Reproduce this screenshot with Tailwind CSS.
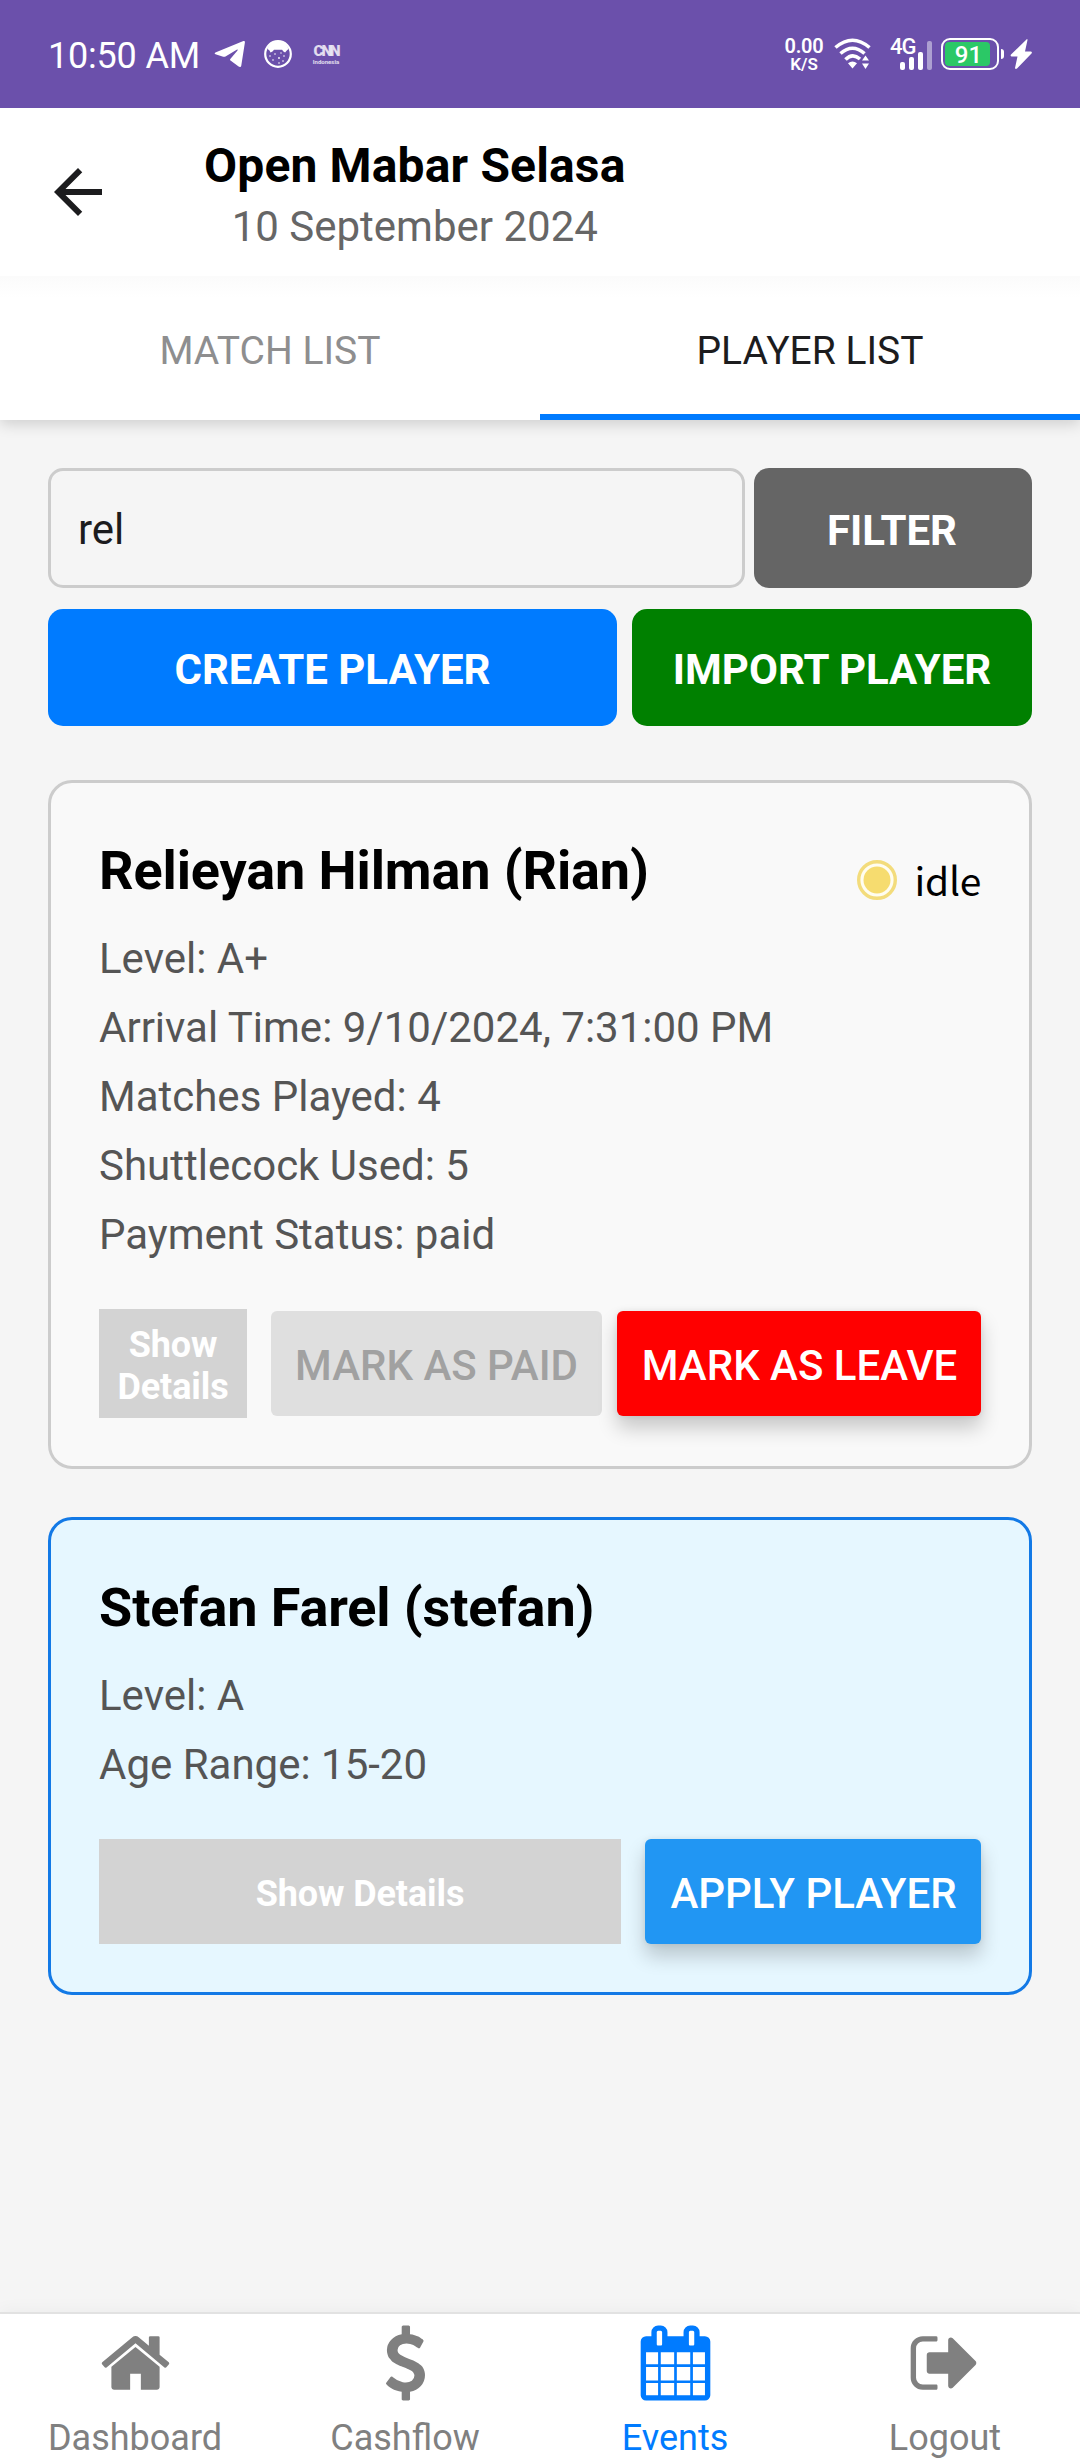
<!DOCTYPE html>
<html lang="en">
<head>
<meta charset="utf-8">
<title>Player List</title>
<script src="https://cdn.jsdelivr.net/npm/@tailwindcss/browser@4"></script>
</head>
<body class="w-[1080px] h-[2460px] overflow-hidden bg-[#f5f5f5] font-[Roboto,sans-serif] flex flex-col">

<!-- Status bar -->
<div class="h-[108px] shrink-0 bg-[#6b50ab] text-white flex items-center pl-[48px] pr-[48px]">
  <span class="text-[36px] leading-[44px] w-[152px] whitespace-nowrap pt-[3px] tracking-[-0.2px]">10:50 AM</span>
  <svg class="ml-[14px] w-[32px] h-[28px]" viewBox="0 0 32 28"><path fill="#fff" d="M2 12.3 29.4 1c1-.3 1.7.3 1.5 1.400L27.300 25.500c-.3 1.600-1.500 1.900-2.700 1.100L16.500 20.500c-.6-.5-.6-1.200 0-1.800l7-8.200c.5-.7 0-1.200-.8-.7L11.500 16.500c-.7.4-1.500.5-2.300.2L1.500 14.200C.2 13.700.4 12.900 2 12.300z"/></svg>
  <svg class="ml-[17px] w-[30px] h-[30px]" viewBox="0 0 30 30"><circle cx="15" cy="15" r="12.800" fill="none" stroke="#fff" stroke-width="2.200"/><path fill="#fff" d="M4.500 10C6 5 10 2.500 15 2.500S24 5 25.500 10l-1.700 1.600-1.700 1.800-1.700-1-1.300-1.600H11l-1.500 1.700-2 .9-1-2z"/><g fill="#fff"><circle cx="7" cy="17" r=".8"/><circle cx="12" cy="15" r=".8"/><circle cx="16" cy="19" r=".9"/><circle cx="21" cy="17" r=".8"/><circle cx="10" cy="21" r=".8"/><circle cx="20" cy="22" r=".8"/><circle cx="16" cy="24" r=".8"/><circle cx="18" cy="14" r=".7"/></g></svg>
  <div class="ml-[19px] w-[28px] flex flex-col items-center text-white/80">
    <span class="text-[15px] leading-[14px] font-black tracking-[-2px]">CNN</span>
    <span class="text-[6px] leading-[7px] font-bold">Indonesia</span>
  </div>
  <div class="ml-auto w-[42px] flex flex-col items-center font-semibold">
    <span class="text-[20px] leading-[20px] tracking-[-0.3px]">0.00</span>
    <span class="text-[17px] leading-[18px] mt-[-1px]">K/S</span>
  </div>
  <svg class="ml-[9px] w-[38px] h-[32px]" viewBox="0 0 38 32"><g fill="none" stroke="#fff" stroke-width="3.600"><path d="M1.500 9.500Q18.500-5 35.500 9.500"/><path d="M6.500 15.500Q18.500 5 30.500 15.500"/><path d="M11.500 21.500Q18.500 14.500 26 21"/></g><path fill="#fff" d="M14 25.300q4.500-3.500 9 0L18.500 30.500zM28 22.500l3.500-5 3.500 5zM28 25.500h7L31.500 31z"/></svg>
  <div class="ml-[18px] w-[46px] h-[34px] relative">
    <span class="absolute left-0 top-[-1px] text-[22px] leading-[22px] font-medium tracking-[-1px]">4G</span>
    <svg class="absolute inset-0" width="46" height="34" viewBox="0 0 46 34"><g fill="#fff"><rect x="10" y="25" width="5" height="8" rx="2"/><rect x="19" y="20" width="5" height="13" rx="2"/><rect x="28" y="15" width="5" height="18" rx="2"/><rect x="37" y="4" width="5" height="29" rx="2" opacity=".45"/></g></svg>
  </div>
  <div class="ml-[5px] w-[58px] h-[32px] rounded-[9px] border-2 border-white p-[2px]">
    <div class="w-[45px] h-[24px] rounded-[4px] bg-[#2bc866] text-[24px] leading-[26px] text-center font-medium pl-[2px]">91</div>
  </div>
  <div class="ml-[2px] w-[3px] h-[10px] bg-white rounded-r-[3px]"></div>
  <svg class="ml-[6px] w-[22px] h-[30px]" viewBox="0 0 22 30"><path fill="#fff" d="M17 0 1 15.500q-1 1.500.5 2h6L5 29q.5 1.500 2 .5L21.500 14.500q1-1.500-.5-2h-6L17.500 1q0-1-.5-1z"/></svg>
</div>

<!-- Header -->
<header class="h-[168px] shrink-0 bg-white flex items-start relative z-10">
  <svg class="ml-[42px] mt-[48px] w-[72px] h-[72px]" viewBox="0 0 24 24"><path fill="#1c1c1e" d="M20 11H7.830l5.590-5.590L12 4l-8 8 8 8 1.410-1.410L7.830 13H20v-2z"/></svg>
  <div class="ml-[90px] pt-[28px] flex flex-col items-center">
    <h1 class="text-[48px] leading-[60px] font-bold text-black whitespace-nowrap tracking-[0.15px]">Open Mabar Selasa</h1>
    <p class="text-[42px] leading-[61px] text-[#666]">10 September 2024</p>
  </div>
</header>

<!-- Tabs -->
<nav class="h-[144px] shrink-0 bg-linear-to-b from-[#fbfbfb] to-white to-15% grid grid-cols-2 text-[39px] text-center shadow-[0_4px_14px_rgba(0,0,0,0.16)]">
  <div class="text-[#8e8e8f] pt-[3px] leading-[144px] h-[144px]">MATCH LIST</div>
  <div class="text-[#1c1c1e] pt-[3px] leading-[144px] h-[144px] border-b-[6px] border-[#007bff]">PLAYER LIST</div>
</nav>

<main class="grow px-[48px] pt-[48px]">
  <div class="flex gap-[9px] h-[120px]">
    <div class="w-[697px] border-3 border-[#ccc] rounded-[15px] px-[27px] flex items-center text-[42px] text-[#1c1c1e] pt-[3px]">rel</div>
    <button class="grow bg-[#656565] text-white font-bold text-[42px] rounded-[15px] pt-[5px] pr-[7px] pl-[5px]">FILTER</button>
  </div>
  <div class="flex gap-[15px] h-[117px] mt-[21px]">
    <button class="w-[569px] bg-[#007bff] text-white font-bold text-[42px] rounded-[15px] pt-[4px]">CREATE PLAYER</button>
    <button class="grow bg-[#008000] text-white font-bold text-[42px] rounded-[15px] pt-[4px]">IMPORT PLAYER</button>
  </div>

  <section class="mt-[54px] h-[689px] bg-[#f9f9f9] border-3 border-[#ccc] rounded-[24px] px-[48px] pt-[48px]">
    <div class="flex justify-between h-[93px]">
      <h2 class="text-[54px] leading-[79px] font-bold text-black tracking-[-0.12px]">Relieyan Hilman (Rian)</h2>
      <div class="flex items-center h-[98px] gap-[18px]">
        <svg class="w-[40px] h-[40px]" viewBox="0 0 40 40"><circle cx="20" cy="20" r="18.300" fill="#fffdf0" stroke="#f3dc7c" stroke-width="3.400"/><circle cx="20" cy="20" r="13.500" fill="#f6dc6f"/></svg>
        <span class="font-['Noto_Sans_CJK_SC',sans-serif] text-[39px] leading-[60px] h-[62px] text-black tracking-[-0.3px]">idle</span>
      </div>
    </div>
    <div class="text-[42px] leading-[69px] text-[#555]">
      <p>Level: A+</p>
      <p>Arrival Time: 9/10/2024, 7:31:00 PM</p>
      <p>Matches Played: 4</p>
      <p>Shuttlecock Used: 5</p>
      <p>Payment Status: paid</p>
    </div>
    <div class="flex items-center mt-[40px]">
      <button class="w-[148px] h-[109px] bg-[#d3d3d3] text-white font-bold text-[36px] leading-[42px] px-[15px] pt-[5px] tracking-[-0.1px]">Show Details</button>
      <button class="ml-[24px] w-[331px] h-[105px] bg-[#dfdfdf] text-[#a1a1a1] font-medium text-[42px] rounded-[6px] pt-[4px] whitespace-nowrap">MARK AS PAID</button>
      <button class="ml-[15px] w-[364px] h-[105px] bg-[#f00] text-white font-medium text-[42px] rounded-[6px] pt-[4px] pl-[1px] whitespace-nowrap shadow-[0_12px_20px_rgba(0,0,0,0.2),0_0_6px_rgba(0,0,0,0.08)]">MARK AS LEAVE</button>
    </div>
  </section>

  <section class="mt-[48px] h-[478px] bg-[#e6f7ff] border-3 border-[#1279e6] rounded-[24px] px-[48px] pt-[48px]">
    <h2 class="text-[54px] leading-[79px] h-[93px] font-bold text-black tracking-[-0.12px]">Stefan Farel (stefan)</h2>
    <div class="text-[42px] leading-[69px] text-[#555]">
      <p>Level: A</p>
      <p>Age Range: 15-20</p>
    </div>
    <div class="flex mt-[40px]">
      <button class="w-[522px] h-[105px] bg-[#d3d3d3] text-white font-bold text-[36px] pt-[4px] tracking-[-0.1px]">Show Details</button>
      <button class="ml-[24px] w-[336px] h-[105px] bg-[#2196f3] text-white font-medium text-[42px] rounded-[6px] pt-[4px] pl-[1px] whitespace-nowrap shadow-[0_12px_20px_rgba(0,0,0,0.2),0_0_6px_rgba(0,0,0,0.08)]">APPLY PLAYER</button>
    </div>
  </section>
</main>

<!-- Bottom navigation -->
<footer class="h-[148px] shrink-0 bg-white border-t-2 border-[#e2e2e2] shadow-[0_-4px_14px_rgba(0,0,0,0.03)] grid grid-cols-4 text-[36px] leading-[42px] text-[#808080] fill-[#808080]">
  <div class="flex flex-col items-center pt-[11px] gap-[16px]">
    <svg class="w-[75px] h-[76px] shrink-0" viewBox="0 0 1792 1792"><path d="M1472 992v480q0 26-19 45t-45 19h-384v-384h-256v384h-384q-26 0-45-19t-19-45v-480q0-1 .5-3t.5-3l575-474 575 474q1 2 1 6zm223-69l-62 74q-8 9-21 11h-3q-13 0-21-7l-692-577-692 577q-12 8-24 7-13-2-21-11l-62-74q-8-10-7-23.500t11-21.500l719-599q32-26 76-26t76 26l244 204v-195q0-14 9-23t23-9h192q14 0 23 9t9 23v408l219 182q10 8 11 21.500t-7 23.500z"/></svg>
    <span>Dashboard</span>
  </div>
  <div class="flex flex-col items-center pt-[11px] gap-[16px]">
    <svg class="w-[75px] h-[76px] shrink-0" viewBox="0 0 1792 1792"><path d="M1362 1185q0 153-99.500 263.500t-258.500 136.500v175q0 14-9 23t-23 9h-135q-13 0-22.500-9.500t-9.500-22.500v-175q-66-9-127.500-31t-101.500-44.500-74-48-46.500-37.500-17.500-18q-17-21-2-41l103-135q7-10 23-12 15-2 24 9l2 2q113 99 243 125 37 8 74 8 81 0 142.500-43t61.500-122q0-28-15-53t-33.500-42-58.500-37.500-66-32-80-32.500q-39-16-61.500-25t-61.500-26.500-62.500-31-56.500-35.500-53.500-42.500-43.500-49-35.500-58-21-66.500-8.500-78q0-138 98-242t255-134v-180q0-13 9.500-22.500t22.500-9.500h135q14 0 23 9t9 23v176q57 6 110.500 23t87 33.500 63.500 37.500 39 29 15 14q17 18 5 38l-81 146q-8 15-23 16-14 3-27-7-3-3-14.500-12t-39-26.500-58.500-32-74.500-26-85.500-11.500q-95 0-155 43t-60 111q0 26 8.500 48t29.500 41.500 39.500 33 56 31 60.500 27 70 27.500q53 20 81 31.500t76 35 75.500 42.500 62 50 53 63.500 31.500 76.500 13 94z"/></svg>
    <span>Cashflow</span>
  </div>
  <div class="flex flex-col items-center pt-[11px] gap-[16px] text-[#007bff] fill-[#007bff]">
    <svg class="w-[75px] h-[76px] shrink-0" viewBox="0 0 1792 1792"><path d="M192 1664h288v-288h-288v288zm352 0h320v-288h-320v288zm-352-352h288v-320h-288v320zm352 0h320v-320h-320v320zm-352-384h288v-288h-288v288zm736 736h320v-288h-320v288zm-384-736h320v-288h-320v288zm768 736h288v-288h-288v288zm-384-352h320v-320h-320v320zm-352-864v-288q0-13-9.500-22.500t-22.500-9.500h-64q-13 0-22.500 9.500t-9.500 22.500v288q0 13 9.500 22.500t22.500 9.500h64q13 0 22.500-9.500t9.500-22.500zm736 864h288v-320h-288v320zm-384-384h320v-288h-320v288zm384 0h288v-288h-288v288zm32-480v-288q0-13-9.500-22.500t-22.500-9.500h-64q-13 0-22.500 9.500t-9.500 22.500v288q0 13 9.500 22.500t22.500 9.500h64q13 0 22.500-9.500t9.500-22.500zm384-64v1280q0 52-38 90t-90 38h-1408q-52 0-90-38t-38-90v-1280q0-52 38-90t90-38h128v-96q0-66 47-113t113-47h64q66 0 113 47t47 113v96h384v-96q0-66 47-113t113-47h64q66 0 113 47t47 113v96h128q52 0 90 38t38 90z"/></svg>
    <span>Events</span>
  </div>
  <div class="flex flex-col items-center pt-[11px] gap-[16px]">
    <svg class="w-[75px] h-[76px] shrink-0" viewBox="0 0 1792 1792"><path d="M704 1440q0 4 1 20t.5 26.500-3 23.500-10 19.500-20.500 6.500h-320q-119 0-203.500-84.500t-84.500-203.500v-704q0-119 84.500-203.500t203.500-84.500h320q13 0 22.500 9.500t9.500 22.500q0 4 1 20t.5 26.500-3 23.500-10 19.500-20.500 6.500h-320q-66 0-113 47t-47 113v704q0 66 47 113t113 47h312l11.500 1 11.500 3 8 5.500 7 9 2 13.500zm928-544q0 26-19 45l-544 544q-19 19-45 19t-45-19-19-45v-288h-448q-26 0-45-19t-19-45v-384q0-26 19-45t45-19h448v-288q0-26 19-45t45-19 45 19l544 544q19 19 19 45z"/></svg>
    <span>Logout</span>
  </div>
</footer>
</body>
</html>
